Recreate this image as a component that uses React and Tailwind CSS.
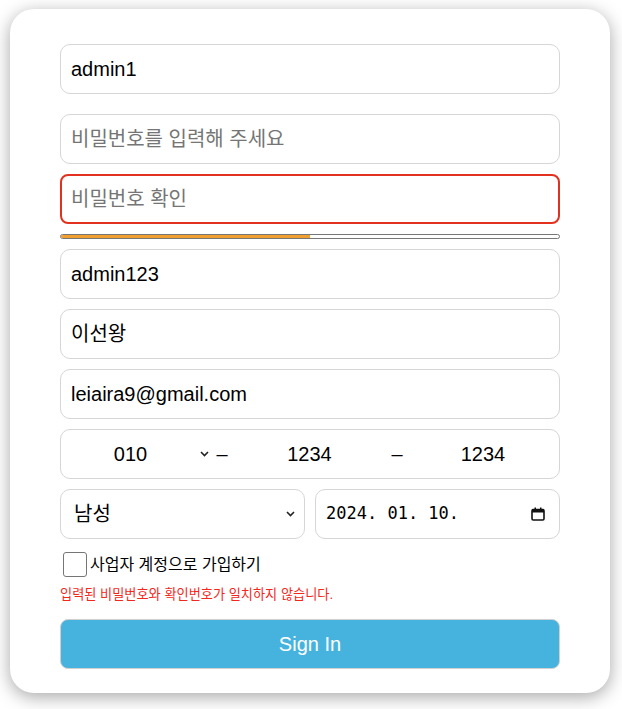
import React from "react";

const font = { fontFamily: '"Liberation Sans", "Noto Sans CJK KR", sans-serif' };

function Field({ children, className = "", color = "text-black" }) {
  return (
    <div
      className={
        "h-[50px] w-full rounded-[10px] border border-[#d6d6d6] px-[10px] flex items-center text-[20px] " +
        color +
        " " +
        className
      }
    >
      {children}
    </div>
  );
}

function Chevron({ className = "" }) {
  return (
    <svg className={className} width="9" height="6" viewBox="0 0 9 6" fill="none">
      <path d="M1 1 L4.5 4.5 L8 1" stroke="#222" strokeWidth="1.6" />
    </svg>
  );
}

export default function App() {
  return (
    <div className="min-h-[709px] w-[622px] bg-white pt-[9px] pl-[10px]" style={font}>
      <div className="w-[600px] h-[684px] rounded-[24px] bg-white shadow-[0_4px_18px_rgba(0,0,0,0.35)] px-[50px] pt-[35px] flex flex-col">
        <Field>admin1</Field>
        <Field className="mt-[20px]" color="text-[#757575]">비밀번호를 입력해 주세요</Field>
        <div className="mt-[10px] h-[50px] w-full rounded-[8px] border-2 border-[#e2321f] px-[9px] flex items-center text-[20px] text-[#757575]">
          비밀번호 확인
        </div>
        <div className="mt-[10px] h-[5px] w-full rounded-full border border-[#777] overflow-hidden bg-white flex">
          <div className="h-full w-1/2 bg-[#f0a030]"></div>
        </div>
        <Field className="mt-[10px]">admin123</Field>
        <Field className="mt-[10px]">이선왕</Field>
        <Field className="mt-[10px]">leiaira9@gmail.com</Field>
        <div className="mt-[10px] h-[50px] w-full rounded-[10px] border border-[#d6d6d6] flex items-center text-[20px] text-black">
          <div className="w-[151px] flex items-center h-full">
            <span className="flex-1 text-center">010</span>
            <Chevron className="mr-[3px]" />
          </div>
          <span className="w-[20px] text-center">–</span>
          <span className="w-[155px] text-center">1234</span>
          <span className="w-[20px] text-center">–</span>
          <span className="flex-1 text-center">1234</span>
        </div>
        <div className="mt-[10px] flex gap-[10px]">
          <div className="h-[50px] w-[245px] rounded-[10px] border border-[#d6d6d6] pl-[13px] pr-[9px] flex items-center text-[20px] text-black">
            <span className="flex-1">남성</span>
            <Chevron />
          </div>
          <div className="h-[50px] flex-1 rounded-[10px] border border-[#d6d6d6] pl-[10px] pr-[14px] flex items-center text-[17px] text-black">
            <span className="flex-1" style={{ fontFamily: '"DejaVu Sans Mono", monospace' }}>2024. 01. 10.</span>
            <svg width="14" height="14" viewBox="0 0 14 14" fill="none">
              <rect x="1" y="2.5" width="12" height="10.5" rx="1.2" stroke="#111" strokeWidth="1.6" />
              <rect x="1" y="2.5" width="12" height="3" fill="#111" />
              <rect x="3.5" y="0.5" width="1.5" height="2.5" fill="#111" />
              <rect x="9" y="0.5" width="1.5" height="2.5" fill="#111" />
            </svg>
          </div>
        </div>
        <div className="mt-[13px] flex items-center pl-[3px]">
          <div className="w-[24px] h-[25px] rounded-[3px] border border-[#767676] bg-white"></div>
          <span className="ml-[3px] text-[16px] text-black">사업자 계정으로 가입하기</span>
        </div>
        <div className="mt-[9px] text-[13.2px] text-[#f2281d] leading-[18px]">
          입력된 비밀번호와 확인번호가 일치하지 않습니다.
        </div>
        <div className="mt-[15px] h-[50px] w-full rounded-[8px] border border-[#d0d0d0] bg-[#46b3df] flex items-center justify-center text-[20px] text-white">
          Sign In
        </div>
      </div>
    </div>
  );
}
